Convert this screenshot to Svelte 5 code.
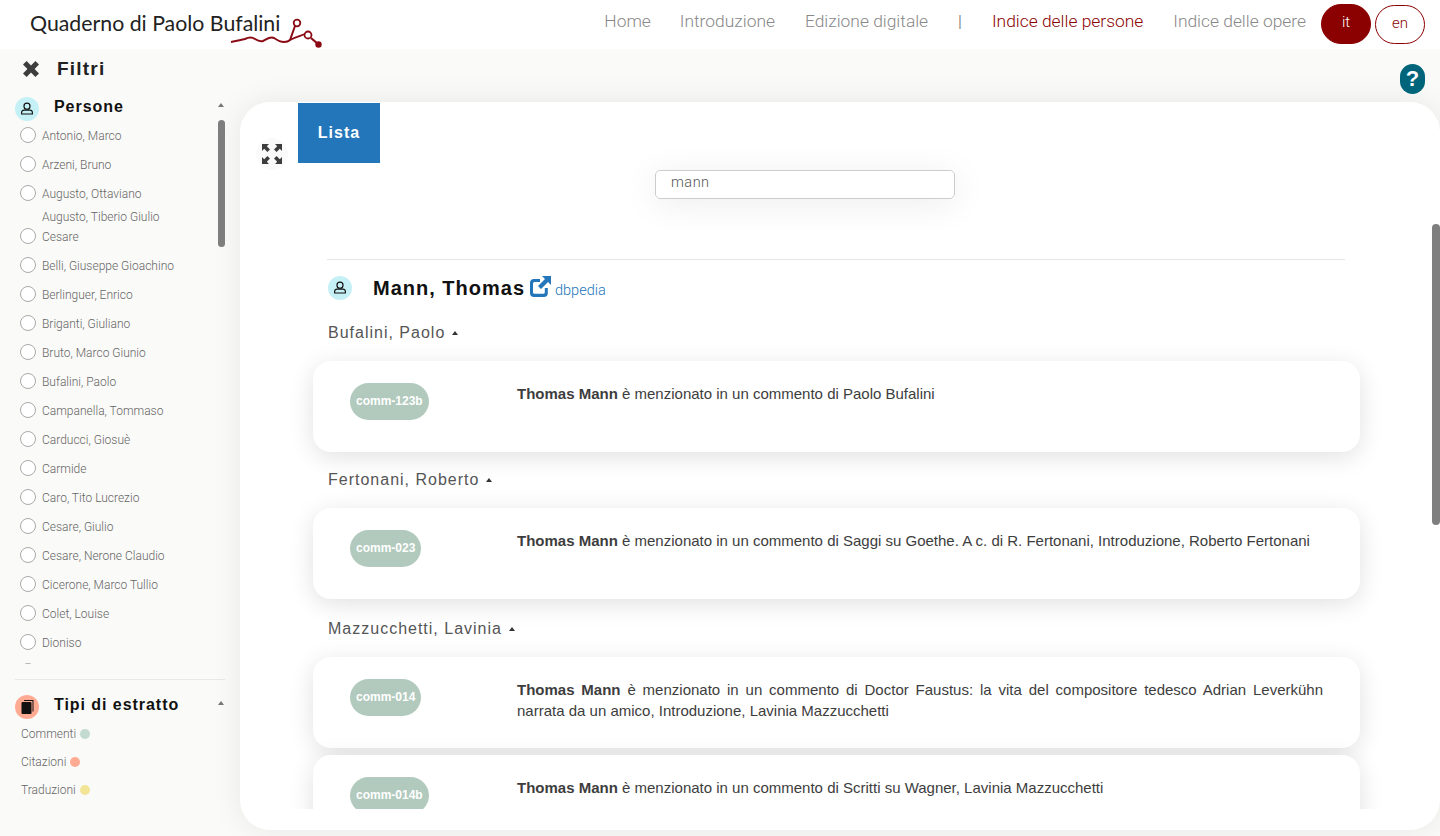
<script>
  const people = ['Antonio, Marco','Arzeni, Bruno','Augusto, Ottaviano','Augusto, Tiberio Giulio Cesare','Belli, Giuseppe Gioachino','Berlinguer, Enrico','Briganti, Giuliano','Bruto, Marco Giunio','Bufalini, Paolo','Campanella, Tommaso','Carducci, Giosuè','Carmide','Caro, Tito Lucrezio','Cesare, Giulio','Cesare, Nerone Claudio','Cicerone, Marco Tullio','Colet, Louise','Dioniso',''];
  const types = [['Commenti','#c2dacf'],['Citazioni','#ffab94'],['Traduzioni','#f2e596']];
  const groups = [
    { name:'Bufalini, Paolo', items:[{id:'comm-123b', text:'è menzionato in un commento di Paolo Bufalini'}] },
    { name:'Fertonani, Roberto', items:[{id:'comm-023', text:'è menzionato in un commento di Saggi su Goethe. A c. di R. Fertonani, Introduzione, Roberto Fertonani'}] },
    { name:'Mazzucchetti, Lavinia', items:[
      {id:'comm-014', text:'è menzionato in un commento di Doctor Faustus: la vita del compositore tedesco Adrian Leverkühn narrata da un amico, Introduzione, Lavinia Mazzucchetti'},
      {id:'comm-014b', text:'è menzionato in un commento di Scritti su Wagner, Lavinia Mazzucchetti'}] }
  ];
</script>

<header class="top">
  <div class="brand">
    <span class="title">Quaderno di Paolo Bufalini</span>
    <svg class="squiggle" width="94" height="36" viewBox="0 0 94 36" fill="none" stroke="#8b0a14">
      <path d="M1 27 C6 26 11 25 15 24 C19 22 22 22 25 24 C28 26 30 27 33 26 C37 24 40 21 44 23 C47 25 50 27 54 27 C57 27 59 26 60 25 L65 11" stroke-width="2"/>
      <circle cx="67" cy="8" r="3.300" stroke-width="1.800"/>
      <path d="M60 25 C65 22 70 21 75 19" stroke-width="1.800"/>
      <circle cx="78" cy="20" r="3.500" stroke-width="1.800"/>
      <path d="M81 23 L88 29" stroke-width="2.200"/>
      <circle cx="88.500" cy="29.500" r="3.200" fill="#8b0a14" stroke="none"/>
    </svg>
  </div>
  <nav class="nav">
    <a href="#a">Home</a>
    <a href="#a">Introduzione</a>
    <a href="#a">Edizione digitale</a>
    <span class="sep">|</span>
    <a href="#a" class="active">Indice delle persone</a>
    <a href="#a">Indice delle opere</a>
    <div class="langs">
      <span class="lang on">it</span>
      <span class="lang">en</span>
    </div>
  </nav>
</header>

<div class="layout">
  <aside class="side">
    <div class="filtri">
      <svg width="18" height="18" viewBox="0 0 18 18" fill="#3d3d3d"><path d="M4.600 1 9 5.400 13.400 1 17 4.600 12.600 9 17 13.400 13.400 17 9 12.600 4.600 17 1 13.400 5.400 9 1 4.600Z"/></svg>
      <b>Filtri</b>
    </div>
    <div class="sec-head">
      <span class="badge blue">
        <svg width="14" height="14" viewBox="0 0 12 12" fill="none" stroke="#111" stroke-width="1"><circle cx="6" cy="3.600" r="2.600"/><path d="M3.400 6.900h5.200a2 2 0 0 1 2 2v1.400H1.400V8.900a2 2 0 0 1 2-2Z"/></svg>
      </span>
      <b>Persone</b>
      <i class="arrow"></i>
    </div>
    <div class="list-wrap">
      <ul class="people">
        {#each people as p}
          <li><span class="radio"></span><span class="pname">{p}</span></li>
        {/each}
      </ul>
      <span class="thumb"></span>
    </div>
    <hr class="side-hr" />
    <div class="sec-head second">
      <span class="badge salmon">
        <svg width="13" height="14" viewBox="0 0 13 14" fill="#111"><path d="M3 0h9.500v11.500h-1V1H3Z"/><rect x="0.500" y="2" width="10" height="12" rx="1"/></svg>
      </span>
      <b>Tipi di estratto</b>
      <i class="arrow"></i>
    </div>
    <ul class="types">
      {#each types as t}
        <li>{t[0]}<span class="dot" style="background:{t[1]}"></span></li>
      {/each}
    </ul>
  </aside>

  <main class="panel">
    <div class="help">
      <svg width="25" height="30" viewBox="0 0 25 30"><rect width="25" height="30" rx="12.500" fill="#00657b"/><text x="12.500" y="22" text-anchor="middle" class="qm">?</text></svg>
    </div>
    <div class="card">
      <div class="tabs">
        <span class="expand">
          <svg width="22" height="22" viewBox="0 0 22 22" fill="#3d3d3d"><path d="M1 1h7L5.800 3.200 9 6.400 6.400 9 3.200 5.800 1 8Z"/><path d="M21 1v7l-2.200-2.200L15.600 9 13 6.400l3.200-3.200L14 1Z"/><path d="M1 21v-7l2.200 2.200L6.400 13 9 15.600l-3.200 3.200L8 21Z"/><path d="M21 21h-7l2.200-2.200L13 15.600l2.600-2.600 3.200 3.200L21 14Z"/></svg>
        </span>
        <span class="tab">Lista</span>
      </div>
      <div class="search"><input value="mann" /></div>
      <div class="scroll">
        <hr class="rule" />
        <div class="person">
          <span class="badge blue">
            <svg width="14" height="14" viewBox="0 0 12 12" fill="none" stroke="#111" stroke-width="1"><circle cx="6" cy="3.600" r="2.600"/><path d="M3.400 6.900h5.200a2 2 0 0 1 2 2v1.400H1.400V8.900a2 2 0 0 1 2-2Z"/></svg>
          </span>
          <h2>Mann, Thomas</h2>
          <svg class="ext" width="21" height="21" viewBox="0 0 21 21" fill="#2476bb"><path d="M12 0h9v9l-3-3-7 7-3-3 7-7Z"/><path d="M4 3h6v3H4.500A1.500 1.500 0 0 0 3 7.500v8.800A1.500 1.500 0 0 0 4.500 17.800h8.800a1.500 1.500 0 0 0 1.500-1.500V12h3v5a4 4 0 0 1-4 4H4a4 4 0 0 1-4-4V7a4 4 0 0 1 4-4Z"/></svg>
          <a href="#a" class="db">dbpedia</a>
        </div>
        {#each groups as g, i}
          <div class="group" class:next={i === 1} class:late={i === 2}><span>{g.name}</span><i class="arrow small"></i></div>
          <div class="entries">
            {#each g.items as it}
              <article class="entry">
                <div class="pill-col"><span class="pill">{it.id}</span></div>
                <p><b>Thomas Mann</b> {it.text}</p>
              </article>
            {/each}
          </div>
        {/each}
      </div>
    </div>
    <span class="page-thumb"></span>
  </main>
</div>

<style>
  :global(body) { margin: 0; background: #fafaf8; overflow: hidden; }
  * { box-sizing: border-box; }
  .top { height: 49px; background: #fff; display: flex; justify-content: space-between; padding: 4px 15px 0 30px; }
  .brand { position: relative; padding-top: 5px; }
  .title { font: 400 21.300px/28px Lato, sans-serif; color: #222; }
  .squiggle { position: absolute; left: 200px; top: 11px; overflow: visible; }
  .nav { display: flex; align-items: flex-start; gap: 30px; font: 300 17.400px/34px Roboto, sans-serif; color: #888; }
  .nav a { color: #888; text-decoration: none; }
  .nav a:first-child { margin-right: -1px; }
  .nav a.active { color: #8b0000; }
  .sep { color: #666; }
  .langs { display: flex; gap: 4px; margin-left: -15px; }
  .lang { width: 50px; height: 39px; margin-top: 1px; border: 1px solid #8b0000; border-radius: 20px; background: #fff; color: #8b0000; text-align: center; line-height: 34px; font-size: 15px; }
  .lang.on { height: 40px; margin-top: 0; background: #8b0000; color: #fff; line-height: 35px; }

  .layout { display: grid; grid-template-columns: 240px 1fr; height: 787px; }
  .side { padding-left: 15px; width: 225px; }
  .filtri { display: flex; align-items: center; gap: 17px; padding: 0 0 0 7px; height: 39px; color: #222; font: 700 19px/22px "Liberation Sans", sans-serif; letter-spacing: 1.200px; }
  .sec-head { position: relative; display: flex; align-items: center; gap: 15px; height: 24px; margin-top: 9px; font: 700 16px/20px "Liberation Sans", sans-serif; letter-spacing: .95px; color: #111; }
  .sec-head b { position: relative; top: -2px; }
  .sec-head .arrow { position: absolute; right: 1px; top: 6px; }
  .sec-head.second { margin-top: 15px; }
  .badge { flex: none; width: 24px; height: 24px; border-radius: 50%; display: flex; align-items: center; justify-content: center; }
  .blue { background: #c5f0f5; }
  .salmon { background: #ffab94; }
  .arrow { display: block; width: 0; height: 0; border: 3px solid transparent; border-top: 0; border-bottom: 4px solid #777; }
  .list-wrap { position: relative; height: 544px; overflow: hidden; margin-top: -1px; }
  .thumb { position: absolute; right: 0; top: 0; width: 7px; height: 127px; border-radius: 4px; background: #7f7f7f; }
  .people { list-style: none; margin: 0; padding: 0 0 0 5px; font: 300 12px/20px Roboto, sans-serif; color: #666; }
  .people li { display: flex; align-items: flex-end; gap: 6px; min-height: 26px; margin-bottom: 3px; }
  .pname { max-width: 140px; }
  .radio { flex: none; width: 16px; height: 16px; margin-bottom: 3px; border: 1px solid #aaa; border-radius: 50%; background: #fff; }
  .side-hr { border: 0; border-top: 1px solid #e8e8e8; margin: 15px 0 0; }
  .types { list-style: none; margin: 1px 0 0; padding: 0 0 0 6px; font: 300 12px/28px Roboto, sans-serif; color: #666; }
  .types li { display: flex; align-items: center; gap: 4px; }
  .dot { width: 10px; height: 10px; border-radius: 50%; }

  .panel { position: relative; padding-top: 53px; }
  .help { position: absolute; right: 15px; top: 15px; line-height: 0; }
  .qm { font: 900 22px "Liberation Sans", sans-serif; fill: #fff; }
  .card { height: 728px; background: #fff; border-radius: 30px; box-shadow: 0 0 30px rgba(0,0,0,.08); padding-top: 1px; overflow: hidden; }
  .tabs { display: flex; align-items: flex-start; padding-left: 16px; height: 60px; }
  .expand { width: 32px; height: 32px; margin-top: 35px; margin-right: 10px; border-radius: 50%; background: #fafafa; display: flex; align-items: center; justify-content: center; }
  .tab { width: 82px; height: 60px; background: #2476bb; color: #fff; text-align: center; font: 700 16px/60px "Liberation Sans", sans-serif; letter-spacing: 1px; }
  .search { margin: 7px 0 0 415px; width: 300px; box-shadow: 0 5px 35px rgba(0,0,0,.08); }
  .search input { display: block; width: 300px; height: 29px; padding: 0 15px 5px; border: 1px solid #ccc; border-radius: 5px; background: #fff; color: #555; font: 300 14.500px Roboto, sans-serif; letter-spacing: .5px; outline: none; }
  .scroll { height: 610px; padding: 60px 80px 0 73px; overflow: hidden; }
  .rule { border: 0; border-top: 1px solid #e6e6e6; margin: 0 15px 0 14px; }
  .person { display: flex; align-items: center; margin: 15px 0 0 15px; height: 27px; color: #111; }
  .person .badge { position: relative; top: -1px; margin-right: 21px; }
  h2 { margin: 0; font: 700 20px/27px "Liberation Sans", sans-serif; letter-spacing: 1px; }
  .ext { margin: -4px 4px 0 5px; }
  .db { margin-top: 3px; color: #2476bb; text-decoration: none; font: 300 14.500px Roboto, sans-serif; }
  .group { display: flex; align-items: center; gap: 7px; margin: 19px 0 0 15px; height: 24px; font: 400 16px/24px "Liberation Sans", sans-serif; letter-spacing: 1px; color: #555; }
  .group.next { margin-top: 16px; }
  .group.late { margin-top: 18px; }
  .arrow.small { border-bottom-color: #333; }
  .entries { display: flex; flex-direction: column; gap: 7px; margin-top: 16px; }
  .entry { display: grid; grid-template-columns: 167px 1fr; height: 91px; padding: 22px 37px 0; background: #fff; border-radius: 18px; box-shadow: 0 5px 25px rgba(0,0,0,.12); }
  .pill { display: inline-block; height: 37px; padding: 0 6px; border-radius: 19px; background: #b1cabd; color: #fff; font: 700 12px/37px "Liberation Sans", sans-serif; }
  .pill-col { line-height: 0; }
  .entry p { margin: 0; font: 400 15px/21px "Liberation Sans", sans-serif; color: #3d3d3d; text-align: justify; }
  .page-thumb { position: absolute; right: 0; top: 175px; width: 8px; height: 301px; border-radius: 4px; background: #7f7f7f; }
</style>
